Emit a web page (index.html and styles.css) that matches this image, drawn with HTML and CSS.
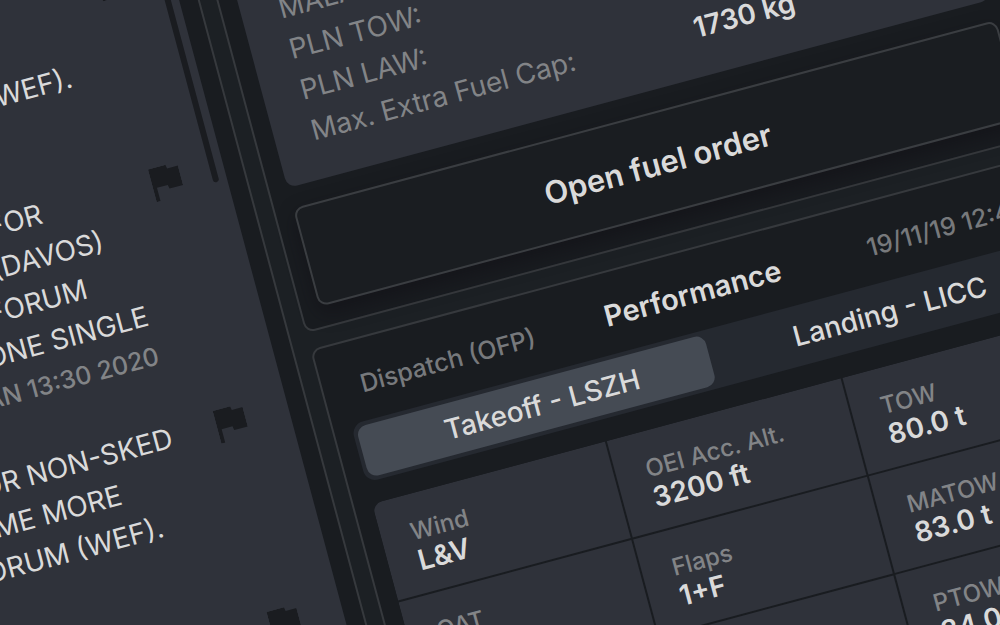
FILE: index.html
```html
<!doctype html>
<html lang="en">
  <head>
    <meta charset="UTF-8" />
    <meta name="viewport" content="width=device-width, initial-scale=1.0" />
    <title>Flight Briefing</title>
    <link rel="stylesheet" href="styles.css">
  </head>
  <body>
    <svg width="0" height="0" class="sprite" aria-hidden="true">
      <symbol id="flag" viewBox="5 4 15 17">
        <path d="M14.4 6 14 4H5v17h2v-7h5.6l.4 2h7V6z" />
      </symbol>
    </svg>

    <main class="board">
      <section class="panel notams">
        <div class="card notam-list">
          <article class="notam">
            <div class="notam-text">
              <p>LSZH</p>
              <time>22 JAN 2020</time>
            </div>
            <svg class="flag"><use href="#flag" /></svg>
          </article>
          <article class="notam">
            <div class="notam-text">
              <p class="inset-20">SLOTS</p>
              <p class="inset-20">MORE</p>
              <p class="inset-3">FORUM (WEF).</p>
              <time class="inset-60">2020</time>
            </div>
            <svg class="flag"><use href="#flag" /></svg>
          </article>
          <article class="notam">
            <div class="notam-text">
              <p class="inset-19">SLOTS FOR</p>
              <p class="inset-6">WEF (DAVOS)</p>
              <p class="inset-13">FORUM</p>
              <p>ONLY ONE SINGLE</p>
              <time>27 JAN 13:30 2020</time>
            </div>
            <svg class="flag"><use href="#flag" /></svg>
          </article>
          <article class="notam">
            <div class="notam-text">
              <p class="inset-2">FOR NON-SKED</p>
              <p class="inset-18">BECOME MORE</p>
              <p class="inset-10">FORUM (WEF).</p>
              <time class="inset-60">2020</time>
            </div>
            <svg class="flag"><use href="#flag" /></svg>
          </article>
          <article class="notam">
            <div class="notam-text">
              <p class="inset-60">RWY</p>
            </div>
            <svg class="flag"><use href="#flag" /></svg>
          </article>
          <div class="scroll-thumb"></div>
        </div>
      </section>

      <div class="column">
        <section class="panel fuel">
          <dl class="card fuel-list">
            <div><dt>Trip Fuel:</dt><dd>5210 kg</dd></div>
            <div><dt>Block Fuel:</dt><dd>8450 kg</dd></div>
            <div><dt>PLN ZFW:</dt><dd>58.2 t</dd></div>
            <div><dt>MAZFW:</dt><dd>61.0 t</dd></div>
            <div><dt>MATOW:</dt><dd>77.0 t</dd></div>
            <div><dt>MALAW:</dt><dd>64.5 t</dd></div>
            <div><dt>PLN TOW:</dt><dd>66.4 t</dd></div>
            <div><dt>PLN LAW:</dt><dd>61.2 t</dd></div>
            <div><dt>Max. Extra Fuel Cap:</dt><dd>1730 kg</dd></div>
          </dl>
          <button class="order-btn" type="button">Open fuel order</button>
        </section>

        <section class="panel performance">
          <header class="panel-header">
            <span>Dispatch (OFP)</span>
            <h2>Performance</h2>
            <time>19/11/19 12:43</time>
          </header>

          <div class="tabs" role="tablist">
            <button class="tab active" type="button" role="tab" aria-selected="true">Takeoff - LSZH</button>
            <button class="tab" type="button" role="tab" aria-selected="false">Landing - LICC</button>
          </div>

          <dl class="facts">
            <div><dt>Wind</dt><dd>L&amp;V</dd></div>
            <div><dt>OEI Acc. Alt.</dt><dd>3200 ft</dd></div>
            <div><dt>TOW</dt><dd>80.0 t</dd></div>
            <div><dt>OAT</dt><dd>12</dd></div>
            <div><dt>Flaps</dt><dd>1+F</dd></div>
            <div><dt>MATOW</dt><dd>83.0 t</dd></div>
            <div><dt>QNH</dt><dd>1013</dd></div>
            <div><dt>A/I</dt><dd>Off</dd></div>
            <div><dt>PTOW</dt><dd>84.0 t</dd></div>
            <div><dt>RWY</dt><dd>28</dd></div>
            <div><dt>V1</dt><dd>140</dd></div>
            <div><dt>VR</dt><dd>142</dd></div>
          </dl>
        </section>
      </div>
    </main>
  </body>
</html>
```

FILE: styles.css
```css
* {
  margin: 0;
  padding: 0;
  box-sizing: border-box;
}

body {
  font-family: Inter, 'Liberation Sans', sans-serif;
  background: #1c2024;
  color: #dadada;
  height: 100vh;
  overflow: hidden;
}

button {
  font-family: inherit;
  color: inherit;
  border: none;
  cursor: pointer;
}

.sprite {
  display: block;
}

/* The whole board is tilted and runs past every edge of the window */
.board {
  display: grid;
  grid-template-columns: 492px 1fr;
  gap: 16px;
  width: calc(100vw + 276px);
  transform-origin: 0 0;
  transform: rotate(-15deg) translate(-299px, -200px);
}

.column {
  display: flex;
  flex-direction: column;
  gap: 17px;
}

.panel {
  display: flex;
  flex-direction: column;
  background: #191c20;
  border: 2px solid #36393d;
  border-radius: 10px;
  padding: 18px;
}

.card {
  background: #2f323a;
  border-radius: 10px;
}

/* NOTAM list */
.notam-list {
  position: relative;
  flex: 1;
  padding: 44px 44px 44px 20px;
}

.notam {
  display: flex;
  gap: 38px;
  margin-bottom: 42px;
}

.notam-text {
  flex: 1;
  text-align: right;
  white-space: nowrap;
}

.notam-text p {
  font-size: 28px;
  line-height: 42px;
}

.notam-text time {
  display: block;
  font-size: 25px;
  font-weight: 500;
  line-height: 40px;
  color: #828487;
}

.inset-2 { padding-right: 8px; }
.inset-3 { padding-right: 12px; }
.inset-6 { padding-right: 24px; }
.inset-10 { padding-right: 40px; }
.inset-13 { padding-right: 52px; }
.inset-18 { padding-right: 72px; }
.inset-19 { padding-right: 76px; }
.inset-20 { padding-right: 80px; }
.inset-60 { padding-right: 240px; }

.flag {
  flex: none;
  width: 30px;
  height: 34px;
  margin-top: 6px;
  fill: #1a1c20;
}

.scroll-thumb {
  position: absolute;
  top: 8px;
  right: 8px;
  width: 6px;
  height: 404px;
  border-radius: 3px;
  background: #1a1c20;
}

/* Fuel */
.fuel {
  gap: 21px;
  padding-bottom: 20px;
}

.fuel-list {
  padding: 30px 38px 28px;
}

.fuel-list div {
  display: grid;
  grid-template-columns: 396px 1fr;
  font-size: 28px;
  line-height: 42px;
}

.fuel-list dt {
  color: #828487;
}

.fuel-list dd {
  font-weight: 600;
}

.order-btn {
  height: 102px;
  border: 2px solid #3a3d41;
  border-radius: 10px;
  background: #1a1d21;
  box-shadow: 0 8px 18px rgba(16, 14, 20, 0.5);
  font-size: 31px;
  font-weight: 600;
}

/* Performance */
.performance {
  padding-top: 0;
}

.panel-header {
  display: grid;
  grid-template-columns: 1fr auto 1fr;
  align-items: baseline;
  padding: 23px 20px 17px;
  font-size: 25px;
  font-weight: 500;
  line-height: 40px;
  color: #77797c;
}

.panel-header h2 {
  font-size: 29px;
  font-weight: 600;
  color: #dadada;
}

.panel-header time {
  text-align: right;
}

.tabs {
  display: flex;
  padding: 4px;
  border-radius: 12px;
  background: #252930;
}

.tab {
  flex: 1;
  height: 52px;
  padding-left: 12px;
  border-radius: 10px;
  background: transparent;
  font-size: 28px;
  font-weight: 500;
}

.tab.active {
  background: #454b54;
}

.facts {
  display: grid;
  grid-template-columns: repeat(3, 1fr);
  gap: 2px;
  margin-top: 22px;
  border-radius: 10px;
  overflow: hidden;
}

.facts div {
  padding: 24px 30px 18px;
  background: #2f323a;
}

.facts dt {
  font-size: 24px;
  font-weight: 500;
  line-height: 28px;
  color: #828487;
}

.facts dd {
  font-size: 28px;
  font-weight: 600;
  line-height: 30px;
}
```
